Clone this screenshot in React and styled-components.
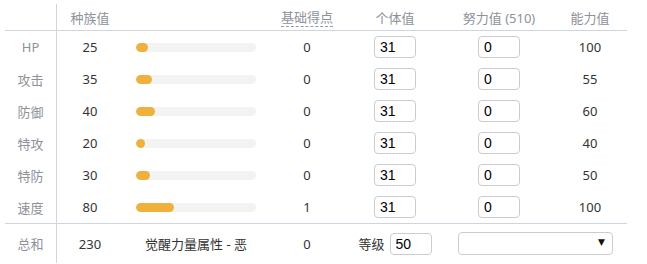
import React from 'react';
import styled, { createGlobalStyle } from 'styled-components';

const GlobalStyle = createGlobalStyle`
  body {
    margin: 0;
    background: #fff;
    font-family: "Noto Sans", "Noto Sans CJK SC", sans-serif;
  }
`;

const Table = styled.div`
  display: grid;
  grid-template-columns: 52px 66px 146px 76px 100px 108px 74px;
  grid-template-rows: 27px repeat(6, 32px) 40px;
  margin: 4px 0 0 5px;
  font-size: 13px;
  color: #333;
`;

const Cell = styled.div`
  display: flex;
  align-items: center;
  justify-content: ${(p) => (p.$start ? 'flex-start' : 'center')};
  grid-column: ${(p) => p.$span || 'auto'};
  border-right: ${(p) => (p.$first ? '1px solid #cfd5de' : 'none')};
  border-bottom: ${(p) => (p.$head ? '1px solid #cfd5de' : 'none')};
  border-top: ${(p) => (p.$foot ? '1px solid #cfd5de' : 'none')};
  color: ${(p) => (p.$head || p.$first ? '#8d9199' : '#333')};
  padding-top: ${(p) => (p.$head ? '1px' : '0')};
  box-sizing: border-box;
  white-space: nowrap;
`;

const Dashed = styled.span`
  border-bottom: 1px dashed #9a9a9a;
  line-height: 17px;
`;

const Track = styled.div`
  width: 120px;
  height: 9px;
  margin-left: 13px;
  border-radius: 5px;
  background: #f3f3f3;
  overflow: hidden;
`;

const Fill = styled.div`
  height: 100%;
  border-radius: 5px;
  background: #efb13b;
`;

const NumInput = styled.input`
  width: 42px;
  height: 22px;
  box-sizing: border-box;
  border: 1px solid #c9cdd3;
  border-radius: 4px;
  padding: 0 5px;
  font-family: "Liberation Sans", Arial, sans-serif;
  font-size: 14px;
  color: #000;
  outline: none;
`;

const Level = styled.label`
  display: flex;
  align-items: center;
  gap: 5px;
  color: #333;
`;

const SelectBox = styled.div`
  position: relative;
  width: 155px;
  height: 23px;
  box-sizing: border-box;
  border: 1px solid #c9cdd3;
  border-radius: 4px;
  margin-left: 13px;
`;

const Arrow = styled.span`
  position: absolute;
  right: 7px;
  top: 4px;
  font-size: 9px;
  color: #111;
  font-family: "DejaVu Sans", sans-serif;
`;

const stats = [
  { name: 'HP', base: 25, stat: 100 },
  { name: '攻击', base: 35, stat: 55 },
  { name: '防御', base: 40, stat: 60 },
  { name: '特攻', base: 20, stat: 40 },
  { name: '特防', base: 30, stat: 50 },
  { name: '速度', base: 80, stat: 100, ev: 1 },
];

export default function App() {
  return (
    <>
      <GlobalStyle />
      <Table>
        <Cell $head $first />
        <Cell $head>种族值</Cell>
        <Cell $head />
        <Cell $head><Dashed>基础得点</Dashed></Cell>
        <Cell $head>个体值</Cell>
        <Cell $head>努力值 (510)</Cell>
        <Cell $head>能力值</Cell>

        {stats.map((s) => (
          <React.Fragment key={s.name}>
            <Cell $first>{s.name}</Cell>
            <Cell>{s.base}</Cell>
            <Cell $start>
              <Track>
                <Fill style={{ width: `${Math.max(9, (s.base / 255) * 120)}px` }} />
              </Track>
            </Cell>
            <Cell>{s.ev || 0}</Cell>
            <Cell><NumInput defaultValue="31" /></Cell>
            <Cell><NumInput defaultValue="0" /></Cell>
            <Cell>{s.stat}</Cell>
          </React.Fragment>
        ))}

        <Cell $foot $first>总和</Cell>
        <Cell $foot>230</Cell>
        <Cell $foot>觉醒力量属性 - 恶</Cell>
        <Cell $foot>0</Cell>
        <Cell $foot>
          <Level>等级<NumInput defaultValue="50" /></Level>
        </Cell>
        <Cell $foot $start $span="span 2">
          <SelectBox><Arrow>▼</Arrow></SelectBox>
        </Cell>
      </Table>
    </>
  );
}
